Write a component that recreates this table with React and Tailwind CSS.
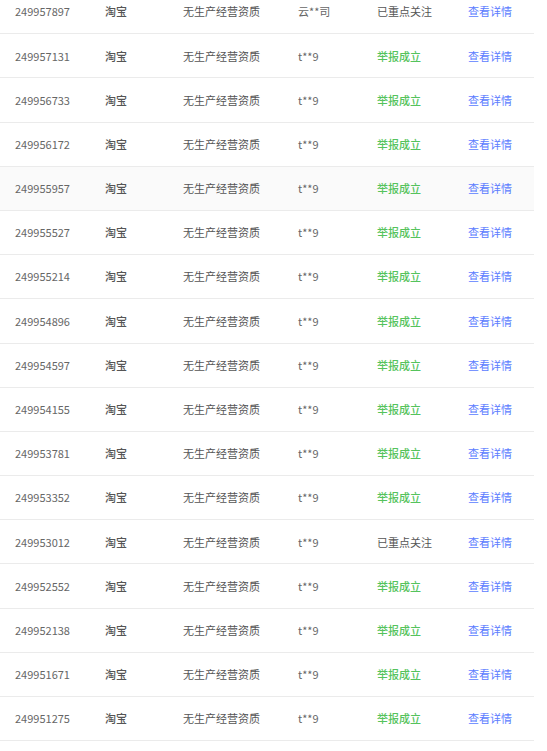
const rows = [
  { id: '249957897', user: '云**司', status: 'focus' },
  { id: '249957131', user: 't**9', status: 'ok' },
  { id: '249956733', user: 't**9', status: 'ok' },
  { id: '249956172', user: 't**9', status: 'ok' },
  { id: '249955957', user: 't**9', status: 'ok', hover: true },
  { id: '249955527', user: 't**9', status: 'ok' },
  { id: '249955214', user: 't**9', status: 'ok' },
  { id: '249954896', user: 't**9', status: 'ok' },
  { id: '249954597', user: 't**9', status: 'ok' },
  { id: '249954155', user: 't**9', status: 'ok' },
  { id: '249953781', user: 't**9', status: 'ok' },
  { id: '249953352', user: 't**9', status: 'ok' },
  { id: '249953012', user: 't**9', status: 'focus' },
  { id: '249952552', user: 't**9', status: 'ok' },
  { id: '249952138', user: 't**9', status: 'ok' },
  { id: '249951671', user: 't**9', status: 'ok' },
  { id: '249951275', user: 't**9', status: 'ok' },
]

const Row = ({ row }) => (
  <div
    className={`grid grid-cols-[90px_78px_115px_79px_91px_81px] h-[44.2px] items-center border-b border-[#ebebeb] ${
      row.hover ? 'bg-[#fafafa]' : 'bg-white'
    }`}
  >
    <div className="pl-[15px] text-[#666]">{row.id}</div>
    <div className="pl-[15px] text-[#555] font-medium">淘宝</div>
    <div className="pl-[15px] text-[#555]">无生产经营资质</div>
    <div className="pl-[15px] text-[#666]">{row.user}</div>
    {row.status === 'ok' ? (
      <div className="pl-[15px] text-[#55c35c] font-medium">举报成立</div>
    ) : (
      <div className="pl-[15px] text-[#555]">已重点关注</div>
    )}
    <div className="pl-[15px] text-[#5b7cff] cursor-pointer">查看详情</div>
  </div>
)

export default function App() {
  return (
    <div className="w-[547px] h-[751px] overflow-hidden bg-white">
      <div
        className="w-[534px] mt-[-10px] text-[11px]"
        style={{ fontFamily: '"Noto Sans CJK SC", "Noto Sans", sans-serif' }}
      >
        {rows.map((row) => (
          <Row key={row.id} row={row} />
        ))}
      </div>
    </div>
  )
}
